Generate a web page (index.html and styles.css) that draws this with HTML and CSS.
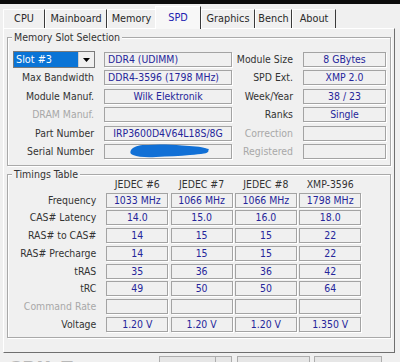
FILE: index.html
```
<!DOCTYPE html>
<html>
<head>
<meta charset="utf-8">
<link rel="stylesheet" href="styles.css">
</head>
<body>
<div class="topbar"></div>
<div class="tabs">
  <div class="tab">CPU</div>
  <div class="tab">Mainboard</div>
  <div class="tab">Memory</div>
  <div class="tab active">SPD</div>
  <div class="tab">Graphics</div>
  <div class="tab">Bench</div>
  <div class="tab">About</div>
</div>
<div class="panel">
  <fieldset class="group slot">
    <legend>Memory Slot Selection</legend>
    <div class="slot-grid">
      <div class="select"><span class="select-val">Slot #3</span><span class="select-btn"><svg width="7" height="4" viewBox="0 0 7 4"><path d="M0 0H7L3.5 4Z" fill="#000"/></svg></span></div>
      <div class="field left">DDR4 (UDIMM)</div>
      <div class="lbl">Module Size</div>
      <div class="field">8 GBytes</div>

      <div class="lbl">Max Bandwidth</div>
      <div class="field left">DDR4-3596 (1798 MHz)</div>
      <div class="lbl">SPD Ext.</div>
      <div class="field">XMP 2.0</div>

      <div class="lbl">Module Manuf.</div>
      <div class="field">Wilk Elektronik</div>
      <div class="lbl">Week/Year</div>
      <div class="field">38 / 23</div>

      <div class="lbl dis">DRAM Manuf.</div>
      <div class="field"></div>
      <div class="lbl">Ranks</div>
      <div class="field">Single</div>

      <div class="lbl">Part Number</div>
      <div class="field">IRP3600D4V64L18S/8G</div>
      <div class="lbl dis">Correction</div>
      <div class="field"></div>

      <div class="lbl">Serial Number</div>
      <div class="field scribbled"><svg class="scribble" width="80" height="14" viewBox="0 0 80 14"><path d="M1 6 C4 2 10 0.5 18 1 C28 0 40 0.5 52 1.5 C62 2 71 2.5 76 4.5 C80 6 79 9 74 9.5 C70 10 66 10.5 60 11 C50 12 38 12.5 26 13 C16 13.5 8 13 3 11 C0 10 0 8 1 6 Z" fill="#1170d6"/><path d="M60 3 C66 3.5 72 4 79 5 L78 6.5 C72 6 66 5.5 60 5 Z" fill="#1170d6"/></svg></div>
      <div class="lbl dis">Registered</div>
      <div class="field"></div>
    </div>
  </fieldset>
  <fieldset class="group timings">
    <legend>Timings Table</legend>
    <div class="t-grid">
      <div></div>
      <div class="hdr">JEDEC #6</div>
      <div class="hdr">JEDEC #7</div>
      <div class="hdr">JEDEC #8</div>
      <div class="hdr">XMP-3596</div>

      <div class="lbl">Frequency</div>
      <div class="field">1033 MHz</div>
      <div class="field">1066 MHz</div>
      <div class="field">1066 MHz</div>
      <div class="field">1798 MHz</div>

      <div class="lbl">CAS# Latency</div>
      <div class="field">14.0</div>
      <div class="field">15.0</div>
      <div class="field">16.0</div>
      <div class="field">18.0</div>

      <div class="lbl">RAS# to CAS#</div>
      <div class="field">14</div>
      <div class="field">15</div>
      <div class="field">15</div>
      <div class="field">22</div>

      <div class="lbl">RAS# Precharge</div>
      <div class="field">14</div>
      <div class="field">15</div>
      <div class="field">15</div>
      <div class="field">22</div>

      <div class="lbl">tRAS</div>
      <div class="field">35</div>
      <div class="field">36</div>
      <div class="field">36</div>
      <div class="field">42</div>

      <div class="lbl">tRC</div>
      <div class="field">49</div>
      <div class="field">50</div>
      <div class="field">50</div>
      <div class="field">64</div>

      <div class="lbl dis">Command Rate</div>
      <div class="field"></div>
      <div class="field"></div>
      <div class="field"></div>
      <div class="field"></div>

      <div class="lbl">Voltage</div>
      <div class="field">1.20 V</div>
      <div class="field">1.20 V</div>
      <div class="field">1.20 V</div>
      <div class="field">1.350 V</div>
    </div>
  </fieldset>
</div>
<div class="footer">
  <div class="logo">CPU-Z</div>
  <div class="btn tools"><span class="btn-text">Tools</span><span class="btn-drop">▼</span></div>
  <div class="btn validate">Validate</div>
  <div class="btn close">Close</div>
</div>
</body>
</html>
```

FILE: styles.css
```
* { box-sizing: border-box; }
html, body { margin: 0; padding: 0; }
body {
  width: 400px;
  height: 362px;
  overflow: hidden;
  background: #f0f0f0;
  font-family: "DejaVu Sans Condensed", "DejaVu Sans", sans-serif;
  font-stretch: condensed;
  font-size: 10.4px;
  color: #333;
}
.topbar { height: 4px; background: #0c0c0c; }
.tabs {
  display: flex;
  align-items: flex-end;
  height: 24px;
  padding-left: 3px;
}
.tab {
  height: 19px;
  line-height: 18px;
  text-align: center;
  border-top: 1px solid #fff;
  border-left: 1px solid #fff;
  border-right: 1px solid #3a3a3a;
  color: #2a2a2a;
  font-size: 10.8px;
}
.tab:nth-child(1) { width: 42px; }
.tab:nth-child(2) { width: 62px; }
.tab:nth-child(3) { width: 48px; border-right: none; }
.tab:nth-child(4) { width: 46px; }
.tab:nth-child(5) { width: 54px; }
.tab:nth-child(6) { width: 37px; }
.tab:nth-child(7) { width: 44px; }
.tab.active {
  height: 23px;
  line-height: 22px;
  margin-bottom: -1px;
  background: #f7f7f7;
  color: #2020b0;
  position: relative;
  z-index: 1;
}
.panel {
  margin: 0 5px 0 3px;
  height: 325px;
  border-top: 1px solid #fff;
  border-left: 1px solid #fff;
  border-right: 1px solid #6f6f6f;
  border-bottom: 1px solid #6f6f6f;
  padding: 1px 3px 0 3px;
}
.group {
  margin: 0;
  border: 1px solid #a9a9a9;
  box-shadow: inset 1px 1px 0 #fff, 1px 1px 0 #fff;
  padding: 0 3px 0 1px;
}
.group legend {
  padding: 0 2px;
  margin-left: 3px;
  line-height: 14px;
  font-size: 10.5px;
  color: #333;
  background: #f0f0f0;
}
.slot { height: 136px; padding-top: 8px; }
.slot-grid {
  display: grid;
  grid-template-columns: 95px 128px 71px 83px;
  grid-auto-rows: 15px;
  row-gap: 3.4px;
}
.lbl {
  text-align: right;
  padding-right: 10px;
  line-height: 15px;
  white-space: nowrap;
  color: #333;
}
.lbl.dis { color: #a8a8a8; }
.field {
  height: 15px;
  line-height: 13px;
  border: 1px solid #a3a3a3;
  box-shadow: 1px 1px 0 #fff;
  text-align: center;
  color: #25259a;
  white-space: nowrap;
  overflow: visible;
}
.field.left { text-align: left; padding-left: 3px; }
.scribbled { position: relative; }
.scribble { position: absolute; left: 25px; top: -1px; }
.select {
  margin: -1px 9px -1px 4px;
  display: flex;
  height: 17px;
  border: 1px solid #7a7a7a;
  background: #fff;
}
.select-val {
  flex: 1;
  background: #0a74d6;
  color: #fff;
  line-height: 15px;
  padding-left: 2px;
  font-size: 10.8px;
}
.select-btn {
  width: 16px;
  display: flex;
  align-items: center;
  justify-content: center;
  background: #f0f0f0;
  border-left: 1px solid #d0d0d0;
}
.timings { height: 171px; margin-top: 1px; padding-top: 0; }
.t-grid {
  display: grid;
  grid-template-columns: 95px 62px 62px 62px 62px;
  column-gap: 2.3px;
  grid-template-rows: 12px;
  grid-auto-rows: 15px;
  row-gap: 2.71px;
  margin-top: -3px;
}
.t-grid .lbl { margin-right: -2.3px; }
.hdr {
  text-align: center;
  line-height: 12px;
  color: #333;
  white-space: nowrap;
}
.footer {
  display: flex;
  align-items: flex-start;
  padding-top: 3px;
}
.logo {
  width: 159px;
  padding-left: 8px;
  font-family: "DejaVu Sans", sans-serif;
  font-weight: bold;
  font-size: 20px;
  line-height: 20px;
  color: #b8b8b8;
  margin-top: 2px;
  letter-spacing: 1px;
}
.btn {
  height: 22px;
  border: 1px solid #adadad;
  background: #e6e6e6;
  text-align: center;
  line-height: 20px;
  color: #222;
}
.tools { width: 73px; display: flex; }
.btn-text { width: 56px; border-right: 1px solid #adadad; }
.btn-drop { flex: 1; font-size: 7px; }
.validate { width: 73px; margin-left: 5px; }
.close { width: 68px; margin-left: 4px; }
```
